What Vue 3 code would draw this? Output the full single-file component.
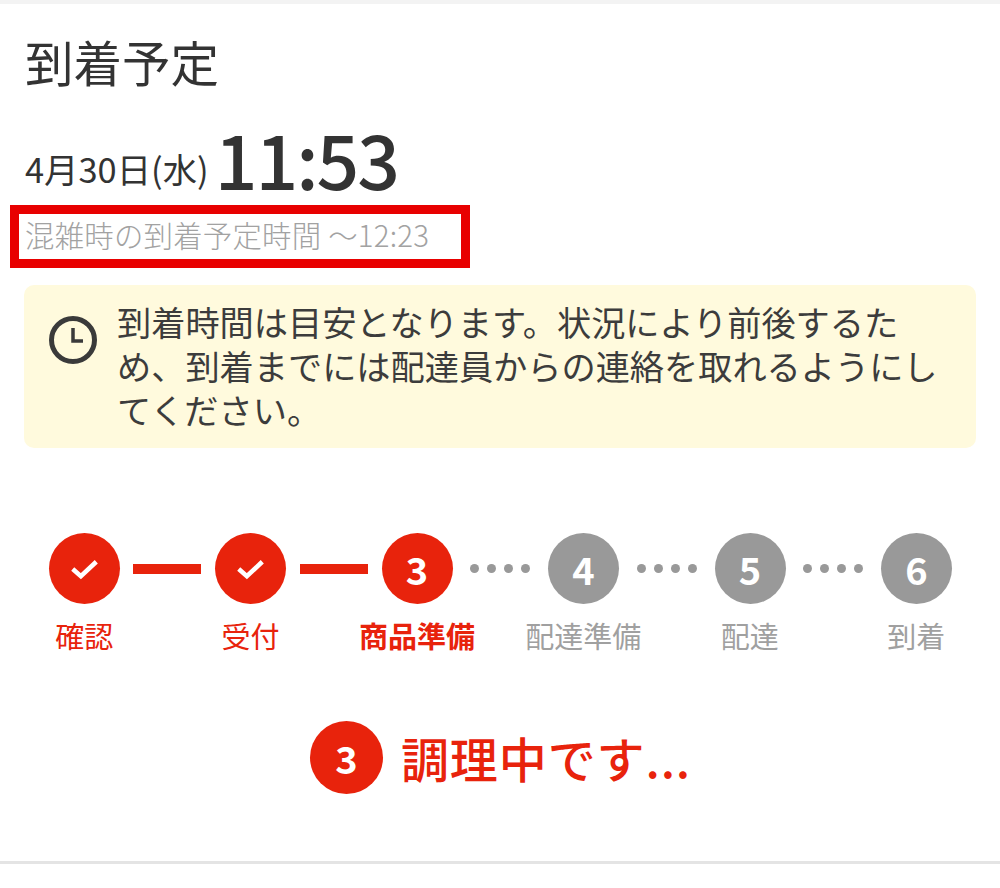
<template>
  <div class="page">
    <div class="top-line"></div>
    <h2 class="title">到着予定</h2>
    <div class="eta">
      <span class="date">4月30日(水)</span>
      <span class="time">11:53</span>
    </div>
    <div class="busy-box">混雑時の到着予定時間 ～12:23</div>
    <div class="notice">
      <svg class="clock" viewBox="0 0 48 48" width="48" height="48">
        <circle cx="24" cy="24" r="21.5" fill="none" stroke="#3a3a3a" stroke-width="5" />
        <path d="M24 12v13h10" fill="none" stroke="#3a3a3a" stroke-width="3.5" />
      </svg>
      <p>到着時間は目安となります。状況により前後するため、到着までには配達員からの連絡を取れるようにしてください。</p>
    </div>

    <div class="track">
      <template v-for="(step, index) in steps" :key="step.label">
        <div class="circle" :class="step.state">
          <svg v-if="step.state === 'done'" viewBox="0 0 32 24" width="29" height="22">
            <path d="M3 12l9 8L29 4" fill="none" stroke="#fff" stroke-width="5" />
          </svg>
          <span v-else>{{ index + 1 }}</span>
        </div>
        <div v-if="index < steps.length - 1" class="link">
          <div v-if="step.state === 'done'" class="bar"></div>
          <div v-else class="dots"><i></i><i></i><i></i><i></i></div>
        </div>
      </template>
    </div>
    <div class="labels">
      <span v-for="step in steps" :key="step.label" :class="step.state">{{ step.label }}</span>
    </div>

    <div class="status">
      <div class="circle current"><span>3</span></div>
      <span class="status-text">調理中です...</span>
    </div>
    <div class="bottom-line"></div>
  </div>
</template>

<script setup>
const steps = [
  { label: '確認', state: 'done' },
  { label: '受付', state: 'done' },
  { label: '商品準備', state: 'current' },
  { label: '配達準備', state: 'todo' },
  { label: '配達', state: 'todo' },
  { label: '到着', state: 'todo' }
]
</script>

<style>
html,
body {
  background: #fff;
}
</style>

<style scoped>
.page {
  width: 1000px;
  height: 888px;
  overflow: hidden;
  font-family: "Noto Sans CJK JP", "Noto Sans", sans-serif;
  color: #333;
  background: #fff;
}

.top-line {
  height: 4px;
  background: #f3f3f3;
}

.title {
  margin: 26px 0 0 25px;
  font-size: 48.5px;
  line-height: 62px;
  font-weight: 400;
}

.eta {
  display: flex;
  align-items: center;
  margin: 30px 0 0 25px;
  height: 72px;
  line-height: 72px;
}

.date {
  font-size: 34.4px;
  line-height: 40px;
  margin-top: 20px;
}

.time {
  font-size: 75px;
  font-weight: 500;
  letter-spacing: -2px;
  margin-left: 6px;
}

.busy-box {
  margin: 11px 0 0 10px;
  width: 460px;
  height: 63px;
  box-sizing: border-box;
  border: 9px solid #e80000;
  padding-left: 6px;
  font-size: 29.4px;
  font-weight: 300;
  letter-spacing: 0.25px;
  line-height: 40px;
  color: #a2a2a2;
  white-space: nowrap;
}

.notice {
  display: flex;
  gap: 20px;
  margin: 17px 24px 0;
  height: 163px;
  box-sizing: border-box;
  padding: 14px 24px 0 25px;
  background: #fffadd;
  border-radius: 10px;
}

.clock {
  flex: none;
  margin-top: 17px;
}

.notice p {
  margin: 0;
  font-size: 34.2px;
  line-height: 44px;
  color: #3c3c3c;
}

.track {
  display: flex;
  align-items: center;
  margin: 85px 48px 0 48.5px;
}

.circle {
  flex: none;
  width: 71px;
  height: 71px;
  border-radius: 50%;
  display: flex;
  align-items: center;
  justify-content: center;
  color: #fff;
  font-size: 38px;
  font-weight: 700;
}

.circle.done,
.circle.current {
  background: #e8230c;
}

.circle.todo {
  background: #999;
}

.link {
  flex: 1;
  display: flex;
  justify-content: center;
}

.bar {
  width: 68px;
  height: 10px;
  background: #e8230c;
}

.dots {
  display: flex;
  gap: 8px;
}

.dots i {
  width: 9px;
  height: 9px;
  border-radius: 50%;
  background: #999;
}

.labels {
  display: grid;
  grid-template-columns: repeat(6, 166.4px);
  margin: 11px 0 0 1px;
  font-size: 29px;
  line-height: 40px;
  text-align: center;
}

.labels .done {
  color: #e8230c;
}

.labels .current {
  color: #e8230c;
  font-weight: 700;
}

.labels .todo {
  color: #a0a0a0;
}

.status {
  display: flex;
  align-items: center;
  justify-content: center;
  gap: 18px;
  margin: 66px 0 0;
  padding-left: 1px;
}

.status .circle {
  width: 73px;
  height: 73px;
}

.status-text {
  font-size: 48px;
  font-weight: 500;
  letter-spacing: 0.9px;
  line-height: 73px;
  color: #e8230c;
}

.bottom-line {
  margin-top: 67px;
  height: 3px;
  background: #e4e4e4;
}
</style>
